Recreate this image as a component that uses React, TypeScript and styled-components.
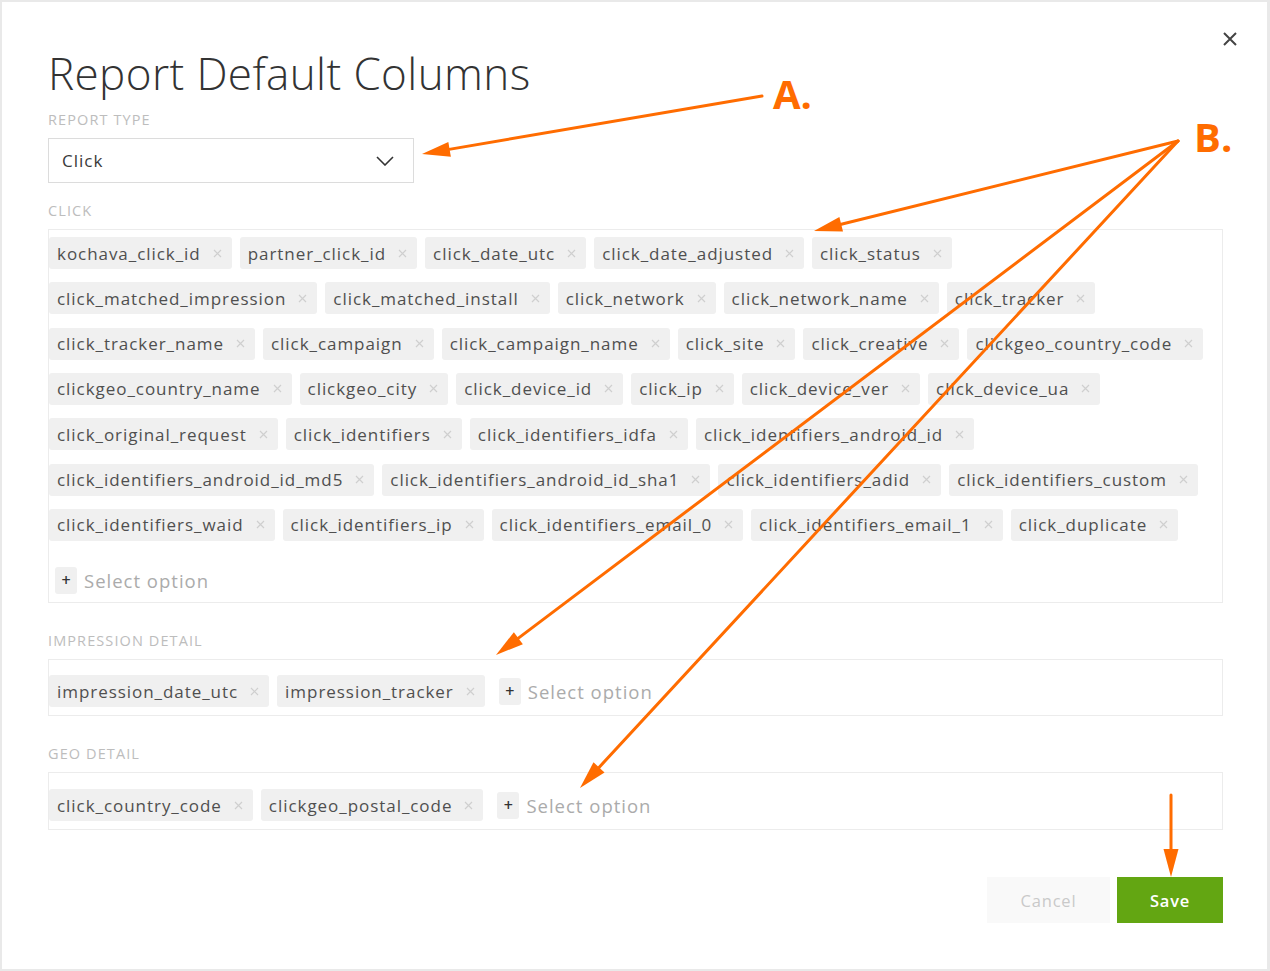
import React from 'react';
import styled, { createGlobalStyle } from 'styled-components';

const GlobalStyle = createGlobalStyle`
    html, body {
        margin: 0;
        padding: 0;
        background: #e9e9e9;
    }
    * {
        box-sizing: border-box;
    }
`;

const accent = '#ff6c00';
const font = `'Open Sans', 'Liberation Sans', sans-serif`;

const clickColumns = [
    'kochava_click_id',
    'partner_click_id',
    'click_date_utc',
    'click_date_adjusted',
    'click_status',
    'click_matched_impression',
    'click_matched_install',
    'click_network',
    'click_network_name',
    'click_tracker',
    'click_tracker_name',
    'click_campaign',
    'click_campaign_name',
    'click_site',
    'click_creative',
    'clickgeo_country_code',
    'clickgeo_country_name',
    'clickgeo_city',
    'click_device_id',
    'click_ip',
    'click_device_ver',
    'click_device_ua',
    'click_original_request',
    'click_identifiers',
    'click_identifiers_idfa',
    'click_identifiers_android_id',
    'click_identifiers_android_id_md5',
    'click_identifiers_android_id_sha1',
    'click_identifiers_adid',
    'click_identifiers_custom',
    'click_identifiers_waid',
    'click_identifiers_ip',
    'click_identifiers_email_0',
    'click_identifiers_email_1',
    'click_duplicate',
];

const impressionColumns = ['impression_date_utc', 'impression_tracker'];
const geoColumns = ['click_country_code', 'clickgeo_postal_code'];

const Page = styled.div`
    position: relative;
    width: 1270px;
    height: 971px;
    padding: 2px 3px 2px 2px;
    font-family: ${font};
`;

const Modal = styled.div`
    position: relative;
    height: 967px;
    background: #fff;
    padding: 45px 44px 0 46px;
    display: flex;
    flex-direction: column;
`;

const CloseButton = styled.button`
    position: absolute;
    top: 30px;
    right: 30px;
    width: 14px;
    height: 14px;
    padding: 0;
    border: 0;
    background: none;
    display: flex;
    cursor: pointer;
`;

const Title = styled.h1`
    margin: 0;
    font-family: ${font};
    font-weight: 300;
    font-size: 44px;
    line-height: 52px;
    color: #333;
    letter-spacing: 0.4px;
`;

const Field = styled.div<{ $top: number }>`
    display: flex;
    flex-direction: column;
    margin-top: ${props => props.$top}px;
`;

const Label = styled.div`
    font-size: 14.5px;
    line-height: 16px;
    letter-spacing: 1.1px;
    text-transform: uppercase;
    color: #bdbdbd;
    margin-bottom: 10px;
`;

const Select = styled.div`
    width: 366px;
    height: 45px;
    border: 1px solid #dcdcdc;
    display: flex;
    align-items: center;
    justify-content: space-between;
    padding: 0 19px 0 13px;
    font-size: 17px;
    letter-spacing: 1px;
    color: #3a3a3a;
`;

const TagBox = styled.div<{ $pt: number; $pb: number }>`
    border: 1px solid #ececec;
    display: flex;
    flex-wrap: wrap;
    align-items: center;
    column-gap: 8px;
    row-gap: 13.33px;
    padding: ${props => props.$pt}px 0 ${props => props.$pb}px 0;
`;

const Tag = styled.div`
    height: 32px;
    display: flex;
    align-items: center;
    gap: 12px;
    padding: 0 10px 0 8px;
    background: #f0f0f0;
    border-radius: 3px;
    font-size: 17px;
    letter-spacing: 0.95px;
    color: #4f4f4f;
    white-space: nowrap;
`;

const AddOption = styled.div<{ $drop?: boolean }>`
    display: flex;
    align-items: center;
    gap: 7px;
    margin-left: 6px;
    margin-top: ${props => (props.$drop ? 10 : 0)}px;
    height: 32px;
    font-size: 18.5px;
    letter-spacing: 1px;
    color: #ababab;
`;

const PlusBox = styled.span`
    width: 22px;
    height: 27px;
    border-radius: 3px;
    background: #f0f0f0;
    display: flex;
    align-items: center;
    justify-content: center;
    font-size: 16px;
    font-weight: 600;
    letter-spacing: 0;
    color: #333;
`;

const Footer = styled.div`
    display: flex;
    justify-content: flex-end;
    gap: 7px;
    margin-top: 47px;
`;

const Button = styled.button<{ $primary?: boolean }>`
    height: 46px;
    width: ${props => (props.$primary ? 106 : 123)}px;
    border: 0;
    border-radius: 0;
    font-family: ${font};
    font-size: 16.5px;
    letter-spacing: 0.8px;
    font-weight: ${props => (props.$primary ? 600 : 400)};
    background: ${props => (props.$primary ? '#63a612' : '#f9f9f9')};
    color: ${props => (props.$primary ? '#fff' : '#c9c9c9')};
    cursor: pointer;
`;

const Overlay = styled.svg`
    position: absolute;
    top: 0;
    left: 0;
    pointer-events: none;
`;

const RemoveIcon = () => (
    <svg width="9" height="9" viewBox="0 0 9 9">
        <path d="M1 1L8 8M8 1L1 8" stroke="#cfcfcf" strokeWidth="1.2" />
    </svg>
);

type TagListProps = {
    items: string[];
    pt: number;
    pb: number;
    dropAdd?: boolean;
};

const TagList = ({ items, pt, pb, dropAdd }: TagListProps) => (
    <TagBox $pt={pt} $pb={pb}>
        {items.map(item => (
            <Tag key={item}>
                {item}
                <RemoveIcon />
            </Tag>
        ))}
        <AddOption $drop={dropAdd}>
            <PlusBox>+</PlusBox>
            Select option
        </AddOption>
    </TagBox>
);

type Point = [number, number];

// arrow from a to b, head sits at b
const Arrow = ({ from, to }: { from: Point; to: Point }) => {
    const [x1, y1] = from;
    const [x2, y2] = to;
    const d = Math.hypot(x2 - x1, y2 - y1);
    const ux = (x2 - x1) / d;
    const uy = (y2 - y1) / d;
    const len = 28;
    const hw = 7.5;
    const bx = x2 - ux * len;
    const by = y2 - uy * len;
    const head = `${x2},${y2} ${bx - uy * hw},${by + ux * hw} ${bx + uy * hw},${by - ux * hw}`;
    return (
        <g>
            <line
                x1={x1}
                y1={y1}
                x2={bx + ux * 2}
                y2={by + uy * 2}
                stroke={accent}
                strokeWidth="3"
                strokeLinecap="round"
            />
            <polygon points={head} fill={accent} />
        </g>
    );
};

const Annotations = () => (
    <Overlay width="1270" height="971" viewBox="0 0 1270 971">
        <Arrow from={[762, 96]} to={[422, 154]} />
        <Arrow from={[1178, 141]} to={[814, 231]} />
        <Arrow from={[1178, 141]} to={[496, 655]} />
        <Arrow from={[1178, 141]} to={[580, 788]} />
        <Arrow from={[1171, 795]} to={[1171, 877]} />
        <text x="773" y="109" fill={accent} fontFamily={font} fontWeight="700" fontSize="40">
            A.
        </text>
        <text x="1194" y="152" fill={accent} fontFamily={font} fontWeight="700" fontSize="40">
            B.
        </text>
    </Overlay>
);

const App = () => {
    return (
        <Page>
            <GlobalStyle />
            <Modal>
                <CloseButton aria-label="Close">
                    <svg width="14" height="14" viewBox="0 0 14 14">
                        <path d="M1 1L13 13M13 1L1 13" stroke="#444" strokeWidth="2" />
                    </svg>
                </CloseButton>
                <Title>Report Default Columns</Title>
                <Field $top={13}>
                    <Label>Report Type</Label>
                    <Select>
                        Click
                        <svg width="18" height="10" viewBox="0 0 18 10">
                            <path d="M1 1L9 9L17 1" fill="none" stroke="#333" strokeWidth="1.6" />
                        </svg>
                    </Select>
                </Field>
                <Field $top={20}>
                    <Label>Click</Label>
                    <TagList items={clickColumns} pt={7} pb={6} dropAdd />
                </Field>
                <Field $top={30}>
                    <Label>Impression Detail</Label>
                    <TagList items={impressionColumns} pt={15} pb={8} />
                </Field>
                <Field $top={30}>
                    <Label>Geo Detail</Label>
                    <TagList items={geoColumns} pt={16} pb={8} />
                </Field>
                <Footer>
                    <Button>Cancel</Button>
                    <Button $primary>Save</Button>
                </Footer>
            </Modal>
            <Annotations />
        </Page>
    );
};

export default App;
